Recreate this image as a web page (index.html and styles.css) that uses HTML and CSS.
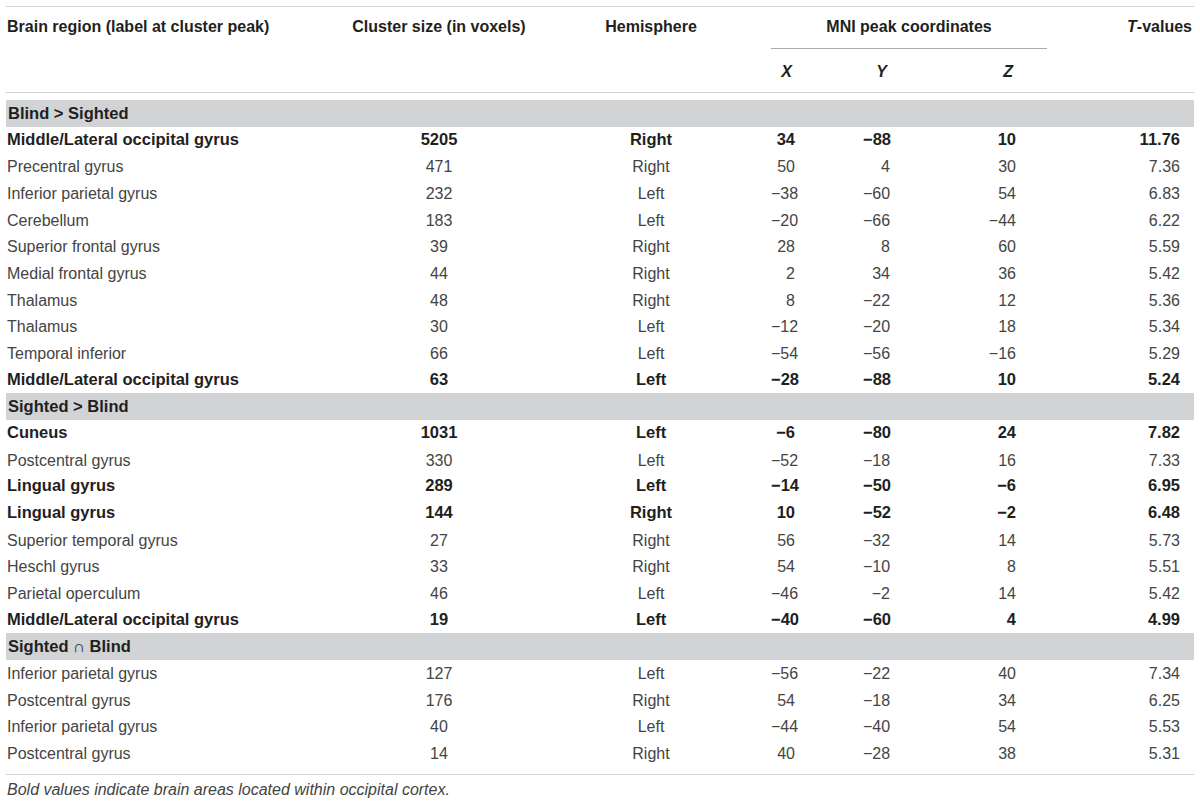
FILE: index.html
```html
<!DOCTYPE html>
<html lang="en">
<head>
    <meta charset="UTF-8">
    <meta name="viewport" content="width=device-width, initial-scale=1.0">
    <link rel="stylesheet" href="styles.css">
    <title>Brain regions table</title>
</head>
<body>
    <div class="table-wrap">
        <table class="results">
            <colgroup>
                <col class="col-region">
                <col class="col-size">
                <col class="col-hemi">
                <col class="col-coord">
                <col class="col-coord">
                <col class="col-coord">
                <col class="col-t">
            </colgroup>
            <thead>
                <tr>
                    <th rowspan="2" class="h-region">Brain region (label at cluster peak)</th>
                    <th rowspan="2" class="h-size">Cluster size (in voxels)</th>
                    <th rowspan="2" class="h-hemi">Hemisphere</th>
                    <th colspan="3" class="h-mni">MNI peak coordinates</th>
                    <th rowspan="2" class="h-t"><i>T</i>-values</th>
                </tr>
                <tr>
                    <th class="h-axis h-x"><i>X</i></th>
                    <th class="h-axis h-y"><i>Y</i></th>
                    <th class="h-axis h-z"><i>Z</i></th>
                </tr>
            </thead>
            <tbody id="rows"></tbody>
        </table>
        <p class="note">Bold values indicate brain areas located within occipital cortex.</p>
    </div>
    <script>
        // [bold, region, size, hemisphere, x, y, z, t]
        const sections = [
            { title: 'Blind > Sighted', rows: [
                [1, 'Middle/Lateral occipital gyrus', '5205', 'Right', '34', '−88', '10', '11.76'],
                [0, 'Precentral gyrus', '471', 'Right', '50', '4', '30', '7.36'],
                [0, 'Inferior parietal gyrus', '232', 'Left', '−38', '−60', '54', '6.83'],
                [0, 'Cerebellum', '183', 'Left', '−20', '−66', '−44', '6.22'],
                [0, 'Superior frontal gyrus', '39', 'Right', '28', '8', '60', '5.59'],
                [0, 'Medial frontal gyrus', '44', 'Right', '2', '34', '36', '5.42'],
                [0, 'Thalamus', '48', 'Right', '8', '−22', '12', '5.36'],
                [0, 'Thalamus', '30', 'Left', '−12', '−20', '18', '5.34'],
                [0, 'Temporal inferior', '66', 'Left', '−54', '−56', '−16', '5.29'],
                [1, 'Middle/Lateral occipital gyrus', '63', 'Left', '−28', '−88', '10', '5.24']
            ]},
            { title: 'Sighted > Blind', rows: [
                [1, 'Cuneus', '1031', 'Left', '−6', '−80', '24', '7.82'],
                [0, 'Postcentral gyrus', '330', 'Left', '−52', '−18', '16', '7.33'],
                [1, 'Lingual gyrus', '289', 'Left', '−14', '−50', '−6', '6.95'],
                [1, 'Lingual gyrus', '144', 'Right', '10', '−52', '−2', '6.48'],
                [0, 'Superior temporal gyrus', '27', 'Right', '56', '−32', '14', '5.73'],
                [0, 'Heschl gyrus', '33', 'Right', '54', '−10', '8', '5.51'],
                [0, 'Parietal operculum', '46', 'Left', '−46', '−2', '14', '5.42'],
                [1, 'Middle/Lateral occipital gyrus', '19', 'Left', '−40', '−60', '4', '4.99']
            ]},
            { title: 'Sighted ∩ Blind', rows: [
                [0, 'Inferior parietal gyrus', '127', 'Left', '−56', '−22', '40', '7.34'],
                [0, 'Postcentral gyrus', '176', 'Right', '54', '−18', '34', '6.25'],
                [0, 'Inferior parietal gyrus', '40', 'Left', '−44', '−40', '54', '5.53'],
                [0, 'Postcentral gyrus', '14', 'Right', '40', '−28', '38', '5.31']
            ]}
        ];

        const cellClasses = ['c-region', 'c-size', 'c-hemi', 'c-x', 'c-y', 'c-z', 'c-t'];
        const tbody = document.getElementById('rows');

        sections.forEach(function(section, i) {
            const band = document.createElement('tr');
            band.className = i === 0 ? 'section first' : 'section';
            const td = document.createElement('td');
            td.colSpan = 7;
            td.textContent = section.title;
            band.appendChild(td);
            tbody.appendChild(band);

            section.rows.forEach(function(row) {
                const tr = document.createElement('tr');
                if (row[0]) tr.className = 'occipital';
                row.slice(1).forEach(function(value, j) {
                    const cell = document.createElement('td');
                    cell.className = cellClasses[j];
                    cell.textContent = value;
                    tr.appendChild(cell);
                });
                tbody.appendChild(tr);
            });
        });
    </script>
</body>
</html>
```
FILE: styles.css
```css
body {
    margin: 0;
    padding: 0;
    background-color: white;
    font-family: "Liberation Sans", Arial, sans-serif;
}

.table-wrap {
    padding: 6px;
}

/* Table frame */
.results {
    width: 1188px;
    table-layout: fixed;
    border-collapse: separate;
    border-spacing: 0;
    border-top: 1px solid #d4d4d4;
    border-bottom: 1px solid #d4d4d4;
    padding-bottom: 7px;
    font-size: 16px;
}

.col-region { width: 344px; }
.col-size { width: 178px; }
.col-hemi { width: 243px; }
.col-coord { width: 92px; }
.col-t { width: 147px; }

/* Header */
th {
    font-weight: bold;
    color: #231f20;
    line-height: 20px;
    padding: 0;
}

thead tr:first-child th {
    vertical-align: top;
    padding-top: 10px;
    border-bottom: 1px solid #d4d4d4;
}

.h-region { text-align: left; padding-left: 1px; }
.h-size { text-align: center; }
.h-hemi { text-align: center; padding-left: 3px; }
.h-t { text-align: right; padding-right: 2px; }

thead tr:first-child th.h-mni {
    text-align: center;
    padding-bottom: 11px;
    border-bottom: 1px solid #a9abae;
}

.h-axis {
    padding-top: 13px;
    padding-bottom: 10px;
    text-align: right;
    border-bottom: 1px solid #d4d4d4;
}

.h-x { padding-right: 71px; }
.h-y { padding-right: 68px; }
.h-z { padding-right: 34px; }

/* Body rows */
td {
    padding: 1px 0 0 0;
    line-height: 25.67px;
    color: #444;
    white-space: nowrap;
}

.occipital td {
    padding-top: 0;
    padding-bottom: 1px;
    font-weight: bold;
    font-size: 16.5px;
    color: #1f1f1f;
}

.section td {
    padding-top: 0;
    line-height: 26.67px;
    background-color: #d1d3d4;
    font-weight: bold;
    font-size: 16.5px;
    color: #1f1f1f;
    padding-left: 2px;
}

/* gap between the header rule and the first band */
.section.first td {
    border-top: 7px solid transparent;
    background-clip: padding-box;
}

.c-region { text-align: left; padding-left: 1px; }
.c-size { text-align: center; }
.c-hemi { text-align: center; padding-left: 3px; }
.c-x { text-align: right; padding-right: 68px; }
.c-y { text-align: right; padding-right: 65px; }
.c-z { text-align: right; padding-right: 31px; }
.c-t { text-align: right; padding-right: 14px; }

/* Footnote */
.note {
    margin: 6px 0 0 1px;
    font-size: 16px;
    line-height: 18px;
    font-style: italic;
    color: #444;
}
```
